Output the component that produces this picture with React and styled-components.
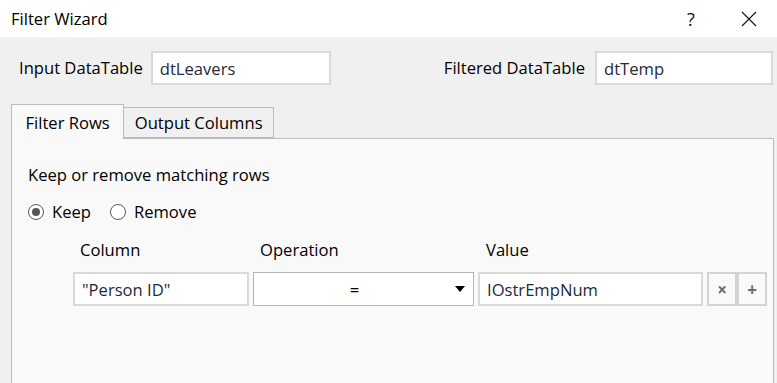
import React from "react";
import styled, { createGlobalStyle } from "styled-components";

const Global = createGlobalStyle`
  html, body { margin: 0; padding: 0; }
  body { font-family: "Open Sans", "Noto Sans", sans-serif; color: #000; }
  * { box-sizing: border-box; }
`;

const Dialog = styled.div`
  width: 777px;
  height: 383px;
  overflow: hidden;
  background: #f0f0f0;
  display: flex;
  flex-direction: column;
`;

const TitleBar = styled.div`
  height: 37px;
  background: #fff;
  display: flex;
  align-items: center;
  padding-left: 11px;
  flex-shrink: 0;
`;

const Title = styled.div`
  font-size: 16.6px;
  flex: 1;
`;

const TitleButton = styled.div`
  width: ${(p) => p.$w}px;
  height: 37px;
  display: flex;
  align-items: center;
  justify-content: center;
  font-size: 18px;
  color: #111;
`;

const Header = styled.div`
  display: flex;
  justify-content: space-between;
  padding: 14px 4px 0 19px;
`;

const Field = styled.div`
  display: flex;
  align-items: center;
  gap: ${(p) => p.$gap}px;
`;

const Label = styled.span`
  font-size: 16.6px;
  line-height: 22px;
`;

const TextBox = styled.div`
  width: ${(p) => p.$w}px;
  height: 34px;
  background: #fff;
  border: 2px solid #dadada;
  display: flex;
  align-items: center;
  padding-left: 7px;
  font-size: 16.6px;
  color: #1e2a3a;
`;

const Tabs = styled.div`
  display: flex;
  align-items: flex-end;
  margin: 19px 0 0 11px;
  position: relative;
  z-index: 1;
`;

const Tab = styled.div`
  height: ${(p) => (p.$active ? 35 : 31)}px;
  padding: 0 ${(p) => (p.$active ? 13.5 : 10.5)}px;
  display: flex;
  align-items: center;
  font-size: 16.6px;
  background: ${(p) => (p.$active ? "#f9f9f9" : "#f0f0f0")};
  border: 1.5px solid #bcbcbc;
  border-bottom: ${(p) => (p.$active ? "none" : "1.5px solid #bcbcbc")};
  border-left: ${(p) => (p.$active ? "1.5px solid #bcbcbc" : "none")};
  margin-bottom: ${(p) => (p.$active ? -1 : 0)}px;
`;

const Panel = styled.div`
  flex: 1;
  margin: 0 3px 0 11px;
  background: #f9f9f9;
  border: 1.5px solid #bcbcbc;
  border-bottom: none;
  padding: 25px 0 0 16px;
`;

const Heading = styled.div`
  font-size: 16.6px;
  line-height: 22px;
`;

const RadioRow = styled.div`
  display: flex;
  align-items: center;
  gap: 19px;
  margin-top: 15px;
  height: 22px;
`;

const Radio = styled.label`
  display: flex;
  align-items: center;
  gap: 8px;
  font-size: 16.6px;
  line-height: 22px;
`;

const Circle = styled.span`
  width: 16px;
  height: 16px;
  border-radius: 50%;
  border: 1.5px solid #5a5a5a;
  background: #fff;
  display: flex;
  align-items: center;
  justify-content: center;
  &::after {
    content: "";
    width: 8px;
    height: 8px;
    border-radius: 50%;
    background: ${(p) => (p.$on ? "#555" : "transparent")};
  }
`;

const Grid = styled.div`
  display: grid;
  grid-template-columns: 176px 221px 225px 30px 30px;
  column-gap: 4px;
  margin: 13px 0 0 45px;
  align-items: center;
`;

const ColHead = styled.div`
  font-size: 16.6px;
  padding-left: ${(p) => p.$pad}px;
  height: 27px;
  display: flex;
  align-items: center;
  margin-bottom: 9px;
`;

const Cell = styled.div`
  height: 34px;
  background: #fff;
  border: 2px solid #dadada;
  display: flex;
  align-items: center;
  padding: 0 7px;
  font-size: 16.6px;
  color: #1e2a3a;
`;

const Select = styled.div`
  height: 34px;
  background: #fff;
  border: 1.5px solid #b4b4b4;
  display: flex;
  align-items: center;
  padding: 0 8px 0 0;
  font-size: 16.6px;
`;

const SelectValue = styled.span`
  flex: 1;
  text-align: center;
`;

const Arrow = styled.span`
  width: 0;
  height: 0;
  border-left: 5px solid transparent;
  border-right: 5px solid transparent;
  border-top: 6px solid #000;
`;

const IconButton = styled.div`
  height: 34px;
  width: 30px;
  border: 2px solid #d3d3d3;
  background: #fafafa;
  display: flex;
  align-items: center;
  justify-content: center;
  color: #6b6b6b;
  font-size: 17px;
  font-weight: bold;
  margin-left: ${(p) => p.$ml || 0}px;
`;

export default function App() {
  return (
    <>
      <Global />
      <Dialog>
        <TitleBar>
          <Title>Filter Wizard</Title>
          <TitleButton $w={60}>?</TitleButton>
          <TitleButton $w={56}>
            <svg width="16" height="16" viewBox="0 0 16 16">
              <path d="M1 1 L15 15 M15 1 L1 15" stroke="#111" strokeWidth="1.1" fill="none" />
            </svg>
          </TitleButton>
        </TitleBar>
        <Header>
          <Field $gap={8}>
            <Label>Input DataTable</Label>
            <TextBox $w={180}>dtLeavers</TextBox>
          </Field>
          <Field $gap={10}>
            <Label>Filtered DataTable</Label>
            <TextBox $w={178}>dtTemp</TextBox>
          </Field>
        </Header>
        <Tabs>
          <Tab $active>Filter Rows</Tab>
          <Tab>Output Columns</Tab>
        </Tabs>
        <Panel>
          <Heading>Keep or remove matching rows</Heading>
          <RadioRow>
            <Radio>
              <Circle $on />
              Keep
            </Radio>
            <Radio>
              <Circle />
              Remove
            </Radio>
          </RadioRow>
          <Grid>
            <ColHead $pad={7}>Column</ColHead>
            <ColHead $pad={7}>Operation</ColHead>
            <ColHead $pad={8}>Value</ColHead>
            <span />
            <span />
            <Cell>"Person ID"</Cell>
            <Select>
              <SelectValue>=</SelectValue>
              <Arrow />
            </Select>
            <Cell>IOstrEmpNum</Cell>
            <IconButton>×</IconButton>
            <IconButton $ml={-4}>+</IconButton>
          </Grid>
        </Panel>
      </Dialog>
    </>
  );
}
